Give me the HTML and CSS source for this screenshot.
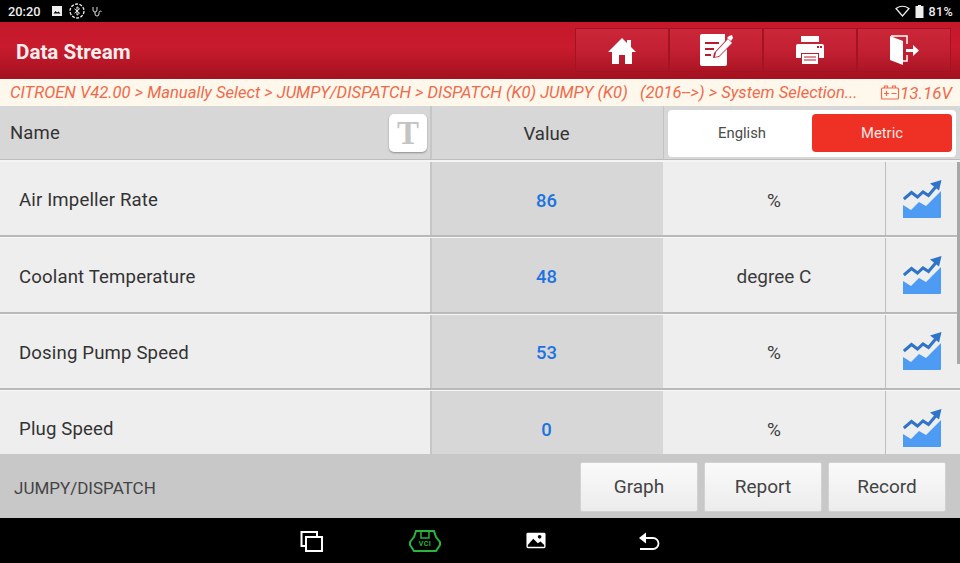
FILE: index.html
```html
<!DOCTYPE html>
<html lang="en">
<head>
<meta charset="utf-8">
<title>Data Stream</title>
<link rel="stylesheet" href="styles.css">
</head>
<body>
<div class="screen">
  <div class="statusbar">
    <div class="status-left">
      <span class="clock">20:20</span>
      <svg class="si" width="12" height="12" viewBox="0 0 12 12"><path fill="#eee" d="M1 1h10v10H1z"/><path fill="#000" d="M2.5 8.5l2-2.5 1.5 1.5 1.5-1 2 2z"/></svg>
      <svg class="si" width="16" height="16" viewBox="0 0 16 16" fill="none" stroke="#eee"><circle cx="8" cy="8" r="7" stroke-dasharray="3 1.4" stroke-width="1.300"/><path d="M5.5 5.8l5 4.4L8 12.2V3.8l2.5 2L5.5 10.2"/></svg>
      <svg class="si" width="13" height="13" viewBox="0 0 13 13" fill="none" stroke="#ddd"><path d="M2 2v3a2 2 0 0 0 4 0V2M4 7v2a2 2 0 0 0 4 0V7.500a1.500 1.500 0 0 1 2.500-1"/></svg>
    </div>
    <div class="status-right">
      <svg width="15" height="12" viewBox="0 0 15 12" fill="none" stroke="#eee" stroke-width="1.200"><path d="M1 3.500Q7.500-1 14 3.500L7.500 11z"/></svg>
      <svg width="9" height="13" viewBox="0 0 9 13"><path fill="#eee" d="M3 0h3v1h2.500v12H.5V1H3z"/></svg>
      <span class="pct">81%</span>
    </div>
  </div>

  <header class="topbar">
    <h1 class="title">Data Stream</h1>
    <nav class="tools">
      <button class="tool" aria-label="Home"><svg class="ic-home" width="28" height="28" viewBox="0 0 28 28"><path fill="#fff" d="M14 1L0 15h4v12h7v-9h6v9h7V15h4l-5-5V3h-4v3z"/></svg></button>
      <button class="tool" aria-label="Edit"><svg width="34" height="34" viewBox="0 0 34 34"><path fill="#fff" d="M1 3a2 2 0 0 1 2-2h23v7L15 20l-1 5 6-1 8-8v15a2 2 0 0 1-2 2H3a2 2 0 0 1-2-2z"/><path fill="none" stroke="#b81c2c" stroke-width="1.800" d="M6 10h14M6 16h9M6 22h6"/><path fill="#fff" d="M17 19L29 6l4 4-13 13-4 1z"/><path fill="#fff" d="M30 3l3-1 1 3-2 3-4-3z"/></svg></button>
      <button class="tool" aria-label="Print"><svg width="30" height="30" viewBox="0 0 30 30"><path fill="#fff" d="M6 1h18v6H6zM3 9h24a2 2 0 0 1 2 2v12h-5v-5H6v5H1V11a2 2 0 0 1 2-2z"/><path fill="#fff" d="M7 19h16v10H7z"/><path stroke="#b81c2c" d="M9 22h12M9 25h12"/><path fill="#b81c2c" d="M22 11h2v2h-2zM25 11h2v2h-2z"/></svg></button>
      <button class="tool" aria-label="Exit"><svg width="32" height="32" viewBox="0 0 32 32"><path fill="#fff" d="M2 2l13 5v24L2 26z"/><path fill="none" stroke="#fff" stroke-width="1.500" d="M3 2h16v8M19 21v6h-4"/><path fill="#fff" d="M18 15h7v-4l6 5.500-6 5.500v-4h-7z"/></svg></button>
    </nav>
  </header>

  <div class="crumbs">
    <span class="crumb-text">CITROEN V42.00 &gt; Manually Select &gt; JUMPY/DISPATCH &gt; DISPATCH (K0) JUMPY (K0)&nbsp;&nbsp; (2016--&gt;) &gt; System Selection...</span>
    <span class="volt">
      <svg width="20" height="15" viewBox="0 0 19 15" fill="none" stroke="#f1694a" stroke-width="1.200"><rect x="1" y="3" width="17" height="11" rx="1"/><path d="M4 3V1h3v2M12 3V1h3v2M3.500 8.500h5M6 6v5M11 8.500h5"/></svg>13.16V
    </span>
  </div>

  <div class="table-head">
    <div class="cell-name head-name">
      <span>Name</span>
      <button class="font-btn" aria-label="Text size">T</button>
    </div>
    <div class="cell-value head-value">Value</div>
    <div class="cell-units">
      <div class="switch">
        <span class="opt">English</span>
        <span class="opt opt-on">Metric</span>
      </div>
    </div>
  </div>

  <div class="rows">
    <div class="row">
      <div class="cell-name">Air Impeller Rate</div>
      <div class="cell-value num">86</div>
      <div class="cell-unit">%</div>
      <div class="cell-graph"><svg class="chart" viewBox="0 0 40 38"><use href="#chart"/></svg></div>
    </div>
    <div class="row">
      <div class="cell-name">Coolant Temperature</div>
      <div class="cell-value num">48</div>
      <div class="cell-unit">degree C</div>
      <div class="cell-graph"><svg class="chart" viewBox="0 0 40 38"><use href="#chart"/></svg></div>
    </div>
    <div class="row">
      <div class="cell-name">Dosing Pump Speed</div>
      <div class="cell-value num">53</div>
      <div class="cell-unit">%</div>
      <div class="cell-graph"><svg class="chart" viewBox="0 0 40 38"><use href="#chart"/></svg></div>
    </div>
    <div class="row">
      <div class="cell-name">Plug Speed</div>
      <div class="cell-value num">0</div>
      <div class="cell-unit">%</div>
      <div class="cell-graph"><svg class="chart" viewBox="0 0 40 38"><use href="#chart"/></svg></div>
    </div>
    <div class="scrollbar"></div>
  </div>

  <footer class="bottombar">
    <span class="model">JUMPY/DISPATCH</span>
    <div class="actions">
      <button class="action">Graph</button>
      <button class="action">Report</button>
      <button class="action">Record</button>
    </div>
  </footer>

  <div class="navbar">
    <svg width="24" height="22" viewBox="0 0 24 22" fill="none" stroke="#fff" stroke-width="2"><path d="M6 16H1.500V2H17v5"/><rect x="6" y="7" width="16" height="14"/></svg>
    <span class="vci">
      <svg width="32" height="24" viewBox="0 0 32 24" fill="none" stroke="#27b53a" stroke-width="2"><path d="M7 2h18l2 6 4 5v3l-4 6H5l-4-6v-3l4-5z"/><path d="M12 3v6h8V3" stroke-width="1.500"/></svg>
      <span class="vci-label">VCI</span>
    </span>
    <svg width="20" height="17" viewBox="0 0 22 18"><rect x="0.500" y="0.500" width="21" height="17" rx="1.500" fill="#fff"/><path d="M2 14l6-7 5 5 3-2 4 4v2H2z" fill="#000"/><circle cx="15" cy="5" r="2" fill="#000"/></svg>
    <svg class="nav-back" width="22" height="20" viewBox="0 0 22 20" fill="none" stroke="#fff" stroke-width="1.800"><path d="M2 18h13a5.500 5.500 0 0 0 0-11H3"/><path fill="#fff" stroke="none" d="M8 1.500v11L1 7z"/></svg>
  </div>
</div>

<svg width="0" height="0" class="defs">
  <symbol id="chart" viewBox="0 0 40 38">
    <path fill="#4d9bf3" d="M0 25l8 5 8-8 7 4L38 11v26a1 1 0 0 1-1 1H0z"/>
    <path fill="none" stroke="#2f74c8" stroke-width="3" d="M.8 19L8.500 12.500l6 4.500 5.500-5 5.500 3.500L33.500 6"/>
    <path fill="#2f74c8" d="M27 3.500L38.500 0 36 10.500z"/>
  </symbol>
</svg>
</body>
</html>
```
FILE: styles.css
```css
* { box-sizing: border-box; }
html, body { margin: 0; padding: 0; }
body { font-family: Roboto, "Liberation Sans", sans-serif; background: #000; }
button { font-family: inherit; }
.defs { display: block; height: 0; }
.screen { width: 960px; height: 563px; display: flex; flex-direction: column; overflow: hidden; }

.statusbar { height: 22px; background: #000; color: #eee; display: flex; justify-content: space-between; align-items: center; padding: 0 7px 0 8px; flex: none; }
.status-left, .status-right { display: flex; align-items: center; }
.status-left { gap: 6px; }
.status-right { gap: 5px; }
.clock { font-size: 12.8px; font-weight: 500; margin-right: 5px; }
.pct { font-size: 12.5px; font-weight: 500; letter-spacing: .4px; margin-left: -1px; }

.topbar { height: 57px; flex: none; display: flex; align-items: center; justify-content: space-between; padding: 6px 9px 7px 16px; background: linear-gradient(#c5192b 0%, #c81b2d 45%, #a3111f 100%); }
.title { margin: 0; padding-top: 4px; color: #fbeeee; font-size: 20.6px; font-weight: 700; }
.tools { display: flex; height: 44px; }
.tool { width: 94px; height: 44px; padding: 0; border: 1px solid #a31322; background: linear-gradient(#cb2739 0%, #c32033 50%, #ac1524 100%); display: flex; align-items: center; justify-content: center; }
.ic-home { margin-top: 2px; }

.crumbs { height: 27px; flex: none; background: #fef8ec; color: #f1694a; font-style: italic; font-size: 16.6px; display: flex; justify-content: space-between; align-items: center; padding: 0 8px 0 10px; white-space: nowrap; }
.volt { display: flex; align-items: center; font-size: 17px; }

.table-head { height: 56px; flex: none; display: flex; background: #f4f4f4; }
.table-head .cell-name { background: #d7d7d7; height: 54px; font-size: 18.5px; padding: 0 3px 0 10px; justify-content: space-between; border-bottom: 1px solid #bdbdbd; }
.head-value { background: #d7d7d7; font-size: 18.6px; color: #333; height: 54px; border-bottom: 1px solid #bdbdbd; padding: 2px 2px 0 0; }
.cell-units { flex: 1; padding: 4px 4px 0 4px; background: #d7d7d7; border-left: 1px solid #c4c4c4; height: 54px; border-bottom: 1px solid #bdbdbd; }
.font-btn { width: 38px; height: 38px; border: 0; border-radius: 5px; background: #fff; box-shadow: 0 1px 2px rgba(0,0,0,.35); color: #c4c4c4; font: 700 33px/38px "Liberation Serif", serif; padding: 0; }
.switch { height: 47px; background: #fff; border-radius: 4px; display: flex; padding: 4px 4px 5px 4px; }
.opt { flex: 1; display: flex; align-items: center; justify-content: center; font-size: 14.8px; color: #4a4a4a; }
.opt-on { background: #ee3124; color: #fbe9e4; border-radius: 4px; flex: none; width: 140px; }

.rows { flex: 1; overflow: hidden; position: relative; background: #f7f7f7; min-height: 0; }
.row { height: 75.4px; margin-bottom: 1px; display: flex; border-bottom: 2px solid #b9b9b9; background: #eee; }
.cell-name { width: 432px; flex: none; display: flex; align-items: center; padding: 3px 0 0 19px; font-size: 18.6px; color: #333; background: #eee; border-right: 2px solid #c6c6c6; letter-spacing: .15px; }
.cell-value { width: 231px; flex: none; display: flex; align-items: center; justify-content: center; background: #d7d7d7; padding: 3px 2px 0 0; }
.num { color: #1a73e0; font-size: 18.4px; font-weight: 500; }
.cell-unit { width: 223px; flex: none; display: flex; align-items: center; justify-content: center; font-size: 19px; color: #3c3c3c; border-right: 1px solid #bdbdbd; padding-top: 3px; }
.cell-graph { flex: 1; display: flex; align-items: center; justify-content: center; }
.chart { width: 40px; height: 38px; }
.scrollbar { position: absolute; right: 0; top: 0; width: 3px; height: 202px; background: #a8a8a8; }

.bottombar { height: 64px; flex: none; background: #c8c8c8; display: flex; align-items: center; justify-content: space-between; padding: 0 14px 0 14px; }
.model { font-size: 17px; color: #444; padding-top: 3px; }
.actions { display: flex; gap: 6px; padding-top: 1px; }
.action { width: 118px; height: 50px; border: 1px solid #d2d2d2; border-radius: 2px; background: linear-gradient(#fafafa, #ececec); font-size: 19px; color: #444; padding: 0; }

.navbar { height: 45px; flex: none; background: #000; display: flex; align-items: center; padding-left: 300px; gap: 85px; }
.nav-back { margin-left: 7px; }
.vci { position: relative; width: 32px; height: 24px; display: block; }
.vci svg { display: block; }
.vci-label { position: absolute; left: 0; right: 0; top: 11px; text-align: center; font-size: 7px; font-weight: 700; color: #27b53a; letter-spacing: .5px; }
```
